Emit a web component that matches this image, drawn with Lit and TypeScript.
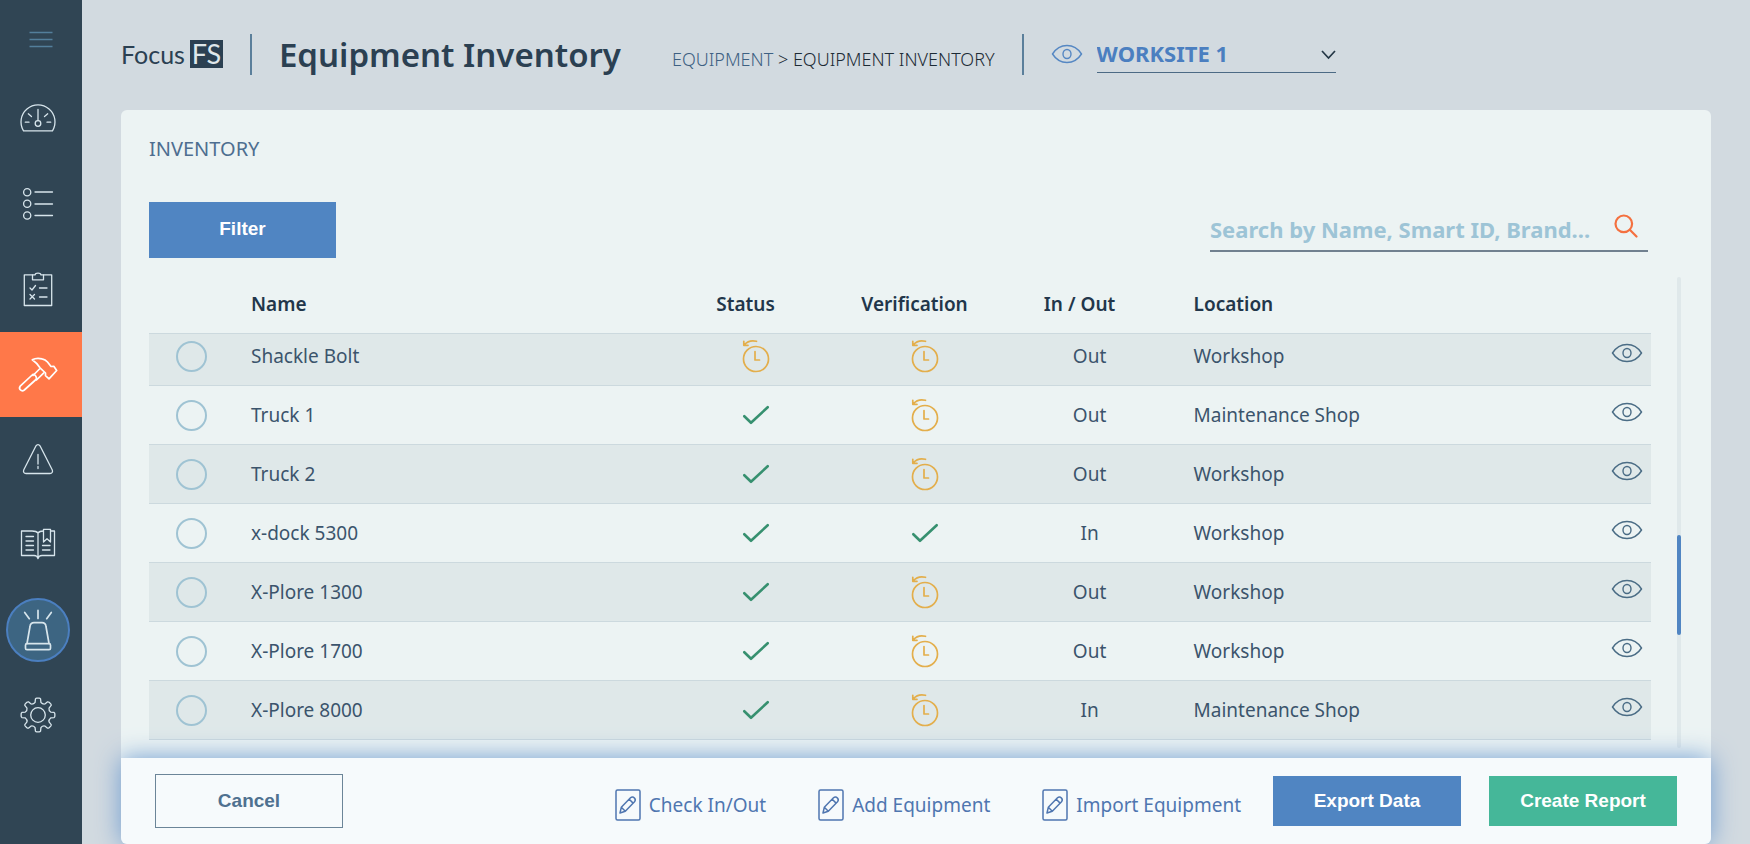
import { LitElement, html, css, svg } from "lit";
import { customElement, property, state } from "lit/decorators.js";

const eye = html`<svg width="32" height="20" viewBox="0 0 32 20" fill="none" stroke="currentColor" stroke-width="1.4" aria-hidden="true">
  <path d="M1.5 10C5 4.500 10 1.500 16 1.500S27 4.500 30.500 10C27 15.500 22 18.500 16 18.500S5 15.500 1.500 10Z" />
  <ellipse cx="16" cy="10" rx="4" ry="4.500" />
</svg>`;

const clock = html`<svg width="28" height="36" viewBox="0 0 28 36" fill="none" stroke="#e3ae4b" stroke-width="1.7" stroke-linecap="round" stroke-linejoin="round" role="img" aria-label="Pending">
  <circle cx="14" cy="21" r="12.500" />
  <path d="M13 13.500V22H17.500" />
  <path d="M14.500 3.300C10 2.100 5.500 3.100 2.300 6.800M1.800 3.300V7.300H6" />
</svg>`;

const check = html`<svg width="28" height="20" viewBox="0 0 28 20" fill="none" stroke="#36906f" stroke-width="2.600" stroke-linecap="round" stroke-linejoin="round" role="img" aria-label="OK">
  <path d="M2.300 11.200L9 17.800L25.700 2.200" />
</svg>`;

const pencil = html`<svg width="26" height="32" viewBox="0 0 26 32" fill="none" stroke="currentColor" stroke-width="1.500" stroke-linejoin="round" aria-hidden="true">
  <rect x="1" y="1" width="24" height="30" rx="1.500" />
  <path d="M5 24L6.300 18.300L15.500 8.800C16.800 7.600 18.300 7.800 19.300 8.900C20.500 10.100 20.600 11.500 19.500 12.800L10.300 22.200ZM6.300 18.300L10.300 22.200M14.200 10.200L18.100 14.100" />
</svg>`;

const navIcons: Record<string, unknown> = {
  Dashboard: svg`<path d="M4.500 29.800A17 17 0 1 1 33.500 29.800Z" /><circle cx="19" cy="22.500" r="2.800" /><path d="M19 8.500V19.500M9.300 12.800L12.500 15.500M28.700 12.800L25.500 15.500M6.300 21.200H10M28 21.200H31.700" />`,
  Lists: svg`<circle cx="8.200" cy="6.200" r="3.600" /><circle cx="8.200" cy="17.800" r="3.600" /><circle cx="8.200" cy="29.500" r="3.600" /><path d="M16 6H33.500M16 18H33.500M16 29.500H33.500" />`,
  Inspections: svg`<path d="M13.500 3.800H5.300V34.500H32.700V3.800H24.500" /><path d="M13.500 3.800H16C16.500 1.500 21.500 1.500 22 3.800H24.500V8.800H13.500Z" /><path d="M11 17L13 19L16.500 14.500M20.500 17H28M11 23.500L15.500 28M15.500 23.500L11 28M20.500 26H28" />`,
  Equipment: svg`<path d="M13.300 3.800C16 2.200 20.500 2.200 23 2.800C25.500 3.300 27 4.200 28.500 6L32 10.500L34.800 10.300L37.700 14.500L30 22.800L26.500 19.700V17L21 11.800C19 8.800 16.500 6 13.300 3.800Z" /><path d="M20.500 13L14 19.500M24.800 16.800L17.500 24M13.700 18.500L1.200 30.200C-.8 33 2.500 36.200 5.300 34L17 23.500C18.500 21.800 15.500 17.200 13.700 18.500Z" />`,
  Incidents: svg`<path d="M17 4.800C18 3.200 20 3.200 21 4.800L33.300 29C34 31 33 32.500 31 32.500H7C5 32.500 4 31 4.700 29Z" /><path d="M19 13.500V23M19 25.500V27.500" />`,
  Library: svg`<path d="M19 7C17.500 5 15.500 5 13 5H2.500V29.500H15C17 29.500 18.500 30 19 32.500C19.500 30 21 29.500 23 29.500H35.500V5H31.500M24.500 5C22 5 20.500 5 19 7V32" /><path d="M24.500 3.300H31.500V16L28 12.800L24.500 16Z" /><path d="M7 10.500H14.500M7 15H14.500M7 19.500H14.500M7 24H14.500M23.500 19.500H31M23.500 24H31" />`,
  Alarm: svg`<path d="M8 32.500L11 15.500C11.300 13 12.800 11.700 15 11.700H23C25.200 11.700 26.700 13 27 15.500L30 32.500" /><rect x="6.500" y="32.700" width="25" height="6" rx="1.500" /><path d="M19 -.6V7.400M5.700 1.400L10.300 7.700M32.300 1.400L27.700 7.700" />`,
  Settings: svg`<circle cx="19" cy="19" r="7.300" />`,
};

const gearPath = (() => {
  const points: string[] = [];
  const teeth = 8;
  const polar = (r: number, deg: number) => {
    const a = (deg * Math.PI) / 180;
    return `${(19 + r * Math.sin(a)).toFixed(2)} ${(19 - r * Math.cos(a)).toFixed(2)}`;
  };
  for (let i = 0; i < teeth; i++) {
    const c = (i * 360) / teeth;
    points.push(`${i ? "L" : "M"}${polar(13, c - 13)}L${polar(16.3, c - 9)}Q${polar(16.9, c - 7)} ${polar(16.900, c - 4)}L${polar(16.900, c + 4)}Q${polar(16.900, c + 7)} ${polar(16.300, c + 9)}L${polar(13, c + 13)}Q${polar(11.500, c + 22.500)} ${polar(13, c + 32)}`);
  }
  return points.join("") + "Z";
})();

interface Item {
  name: string;
  status: boolean;
  verified: boolean;
  direction: "In" | "Out";
  location: string;
}

const items: Item[] = [
  { name: "Shackle Bolt", status: false, verified: false, direction: "Out", location: "Workshop" },
  { name: "Truck 1", status: true, verified: false, direction: "Out", location: "Maintenance Shop" },
  { name: "Truck 2", status: true, verified: false, direction: "Out", location: "Workshop" },
  { name: "x-dock 5300", status: true, verified: true, direction: "In", location: "Workshop" },
  { name: "X-Plore 1300", status: true, verified: false, direction: "Out", location: "Workshop" },
  { name: "X-Plore 1700", status: true, verified: false, direction: "Out", location: "Workshop" },
  { name: "X-Plore 8000", status: true, verified: false, direction: "In", location: "Maintenance Shop" },
];

@customElement("side-nav")
class SideNav extends LitElement {
  @property() active = "Equipment";

  static styles = css`
    :host { display: block; background: #304554; color: #d7e5ec; }
    .menu, .item { display: flex; align-items: center; justify-content: center; border: 0; padding: 0; background: none; color: inherit; }
    .menu { width: 100%; height: 77px; color: #537f9b; cursor: pointer; }
    .item { height: 85px; padding-right: 6px; }
    .item svg { overflow: visible; }
    .active { background: #ff7849; color: #fff; }
    .ring { display: flex; align-items: center; justify-content: center; box-sizing: border-box; width: 64px; height: 64px; border: 2px solid #4b7fc0; border-radius: 50%; background: #3d6582; }
  `;

  render() {
    return html`<nav aria-label="Main">
      <button class="menu" type="button" aria-label="Menu">
        <svg width="24" height="18" viewBox="0 0 24 18" stroke="currentColor" stroke-width="1.300"><path d="M.5 2.500H23.500M.5 9.500H23.500M.5 16.500H23.500" /></svg>
      </button>
      ${Object.entries(navIcons).map(([label, shape]) => {
        const icon = html`<svg width="38" height="38" viewBox="0 0 38 38" fill="none" stroke="currentColor" stroke-width=${label === "Alarm" || label === "Equipment" ? 1.7 : 1.3} stroke-linecap="round" stroke-linejoin="round" aria-hidden="true">${shape}${label === "Settings" ? svg`<path d=${gearPath} />` : ""}</svg>`;
        return html`<a class="item ${label === this.active ? "active" : ""}" href="#" aria-label=${label}>${label === "Alarm" ? html`<span class="ring">${icon}</span>` : icon}</a>`;
      })}
    </nav>`;
  }
}

@customElement("page-header")
class PageHeader extends LitElement {
  static styles = css`
    :host { display: flex; align-items: center; box-sizing: border-box; height: 110px; padding-bottom: 2px; color: #2b4052; font-family: "Noto Sans", sans-serif; white-space: nowrap; }
    .logo { display: flex; align-items: center; gap: 5px; font: 400 25px/28px Lato, sans-serif; color: #2b4052; text-decoration: none; }
    .mark { width: 33px; background: #2b4052; color: #dfe7ea; text-align: center; font-size: 27px; }
    .rule { width: 2px; height: 41px; margin: 0 27px; background: #5b7f9b; }
    h1 { margin: 0; font-size: 33px; line-height: 45px; font-weight: 600; }
    .crumbs { margin: 10px 0 0 51px; font-size: 18px; line-height: 24px; font-weight: 300; color: #1c2a35; }
    .crumbs a { color: #3d6082; text-decoration: none; }
    .site { display: flex; align-items: center; gap: 14px; color: #5587c3; }
    .pick { position: relative; width: 239px; border-bottom: 1px solid #4c6a85; }
    select { appearance: none; width: 100%; height: 36px; padding: 0 24px 2px 0; border: 0; background: none; color: #4b7fc0; font: 700 22px/30px "Noto Sans", sans-serif; }
    .chevron { position: absolute; right: 0; top: 14px; color: #243746; pointer-events: none; }
  `;

  render() {
    return html`
      <a class="logo" href="#"><span>Focus</span><span class="mark">FS</span></a>
      <span class="rule"></span>
      <h1>Equipment Inventory</h1>
      <nav class="crumbs" aria-label="Breadcrumb"><a href="#">EQUIPMENT</a> &gt; <span>EQUIPMENT INVENTORY</span></nav>
      <span class="rule"></span>
      <div class="site">
        ${eye}
        <div class="pick">
          <select aria-label="Worksite"><option>WORKSITE 1</option></select>
          <svg class="chevron" width="15" height="10" viewBox="0 0 15 10" fill="none" stroke="currentColor" stroke-width="1.700"><path d="M1 1L7.500 8L14 1" /></svg>
        </div>
      </div>`;
  }
}

@customElement("inventory-table")
class InventoryTable extends LitElement {
  @property({ attribute: false }) rows: Item[] = [];

  static styles = css`
    :host { display: block; color: #3b546c; font: 400 19px/24px "Noto Sans", sans-serif; }
    table { width: 100%; border-collapse: collapse; table-layout: fixed; }
    th, td { padding: 0; text-align: left; font-weight: 400; }
    thead th { height: 54px; padding-bottom: 2px; color: #22364a; font-weight: 600; }
    tbody tr { height: 59px; border-top: 1px solid #ccd9de; }
    tbody tr:nth-child(odd) { background: #dfe8e9; }
    tbody tr:last-child { border-bottom: 1px solid #ccd9de; }
    tbody tr:first-child { height: 52px; }
    tbody tr:first-child > * { padding-bottom: 7px; }
    .pick { width: 102px; }
    .name { width: 28%; }
    .status { width: 168px; text-align: center; }
    .verification { width: 170px; text-align: center; }
    .direction { width: 160px; text-align: center; }
    thead .status, thead .verification, thead .direction { padding-right: 20px; box-sizing: border-box; }
    .location { padding-left: 24px; }
    .view { width: 48px; text-align: center; }
    input { display: block; appearance: none; box-sizing: border-box; width: 31px; height: 31px; margin: 0 0 0 27px; border: 2px solid #9fc3d3; border-radius: 50%; }
    input:checked { background: #9fc3d3; }
    svg { display: block; margin: 0 auto; }
    button { display: block; margin: 0 auto; padding: 0 0 6px; border: 0; background: none; color: #4a6c85; cursor: pointer; }
  `;

  render() {
    return html`<table>
      <thead>
        <tr>
          <td class="pick"></td>
          <th class="name" scope="col">Name</th>
          <th class="status" scope="col">Status</th>
          <th class="verification" scope="col">Verification</th>
          <th class="direction" scope="col">In / Out</th>
          <th class="location" scope="col">Location</th>
          <td class="view"></td>
        </tr>
      </thead>
      <tbody>
        ${this.rows.map((row) => html`<tr>
          <td><input type="checkbox" aria-label=${`Select ${row.name}`} /></td>
          <th scope="row">${row.name}</th>
          <td class="status">${row.status ? check : clock}</td>
          <td class="verification">${row.verified ? check : clock}</td>
          <td class="direction">${row.direction}</td>
          <td class="location">${row.location}</td>
          <td class="view"><button type="button" aria-label=${`View ${row.name}`}>${eye}</button></td>
        </tr>`)}
      </tbody>
    </table>`;
  }
}

@customElement("action-bar")
class ActionBar extends LitElement {
  static styles = css`
    :host { display: flex; align-items: center; box-sizing: border-box; height: 86px; padding: 0 34px; border-radius: 0 0 6px 6px; background: #f6fafc; box-shadow: 0 0 26px #6f9cd0; }
    button { box-sizing: border-box; width: 188px; height: 50px; padding: 0; border: 0; color: #fff; font: 700 19px/24px "Liberation Sans", sans-serif; cursor: pointer; }
    .cancel { height: 54px; border: 1px solid #6b8598; background: none; color: #4f7190; }
    .links { display: flex; gap: 52px; margin: 8px 32px 0 auto; }
    .links a { display: flex; align-items: center; gap: 8px; color: #4f76b0; font: 400 19px/32px "Noto Sans", sans-serif; text-decoration: none; white-space: nowrap; }
    .main { display: flex; gap: 28px; }
    .export { background: #5085c2; }
    .create { background: #45b799; }
  `;

  render() {
    return html`
      <button class="cancel" type="button">Cancel</button>
      <div class="links">
        ${["Check In/Out", "Add Equipment", "Import Equipment"].map((label) => html`<a href="#">${pencil}${label}</a>`)}
      </div>
      <div class="main">
        <button class="export" type="button">Export Data</button>
        <button class="create" type="button">Create Report</button>
      </div>`;
  }
}

@customElement("app-root")
class AppRoot extends LitElement {
  @state() private query = "";

  static styles = css`
    :host { display: grid; grid-template-columns: 82px minmax(0, 1fr); min-height: 100vh; background: #d2dae0; font-family: "Noto Sans", sans-serif; }
    .page { display: flex; flex-direction: column; padding: 0 39px; }
    .card { display: flex; flex-direction: column; flex: 1; border-radius: 6px; background: #ecf3f3; }
    .content { flex: 1; padding: 25px 30px 0 28px; }
    h2 { margin: 0; color: #4e6e90; font-size: 20px; line-height: 28px; font-weight: 400; }
    .tools { display: flex; justify-content: space-between; align-items: flex-start; margin-top: 39px; padding-right: 33px; }
    .filter { width: 187px; height: 56px; padding: 0 0 2px; border: 0; background: #5085c2; color: #fff; font: 700 19px/24px "Liberation Sans", sans-serif; cursor: pointer; }
    .search { display: flex; align-items: center; width: 438px; height: 48px; border-bottom: 2px solid #71808f; }
    .search input { flex: 1; min-width: 0; height: 36px; margin-top: 6px; padding: 0; border: 0; outline: 0; background: none; color: #4e6e90; font: 700 22px/30px "Noto Sans", sans-serif; }
    .search input::placeholder { color: #9dc4d6; opacity: 1; }
    .search button { padding: 0 10px 0 8px; border: 0; background: none; color: #f4703f; cursor: pointer; }
    .search svg { display: block; }
    .list { display: flex; margin-top: 19px; }
    inventory-table { flex: 1; min-width: 0; padding-bottom: 8px; }
    .track { display: flex; flex-direction: column; width: 4px; margin-left: 26px; background: #dfe8ea; border-radius: 2px; }
    .thumb { height: 100px; margin-top: 258px; border-radius: 2px; background: #5085c2; }
  `;

  render() {
    return html`
      <side-nav active="Equipment"></side-nav>
      <div class="page">
        <page-header></page-header>
        <main class="card">
          <section class="content">
            <h2>INVENTORY</h2>
            <div class="tools">
              <button class="filter" type="button">Filter</button>
              <div class="search">
                <input type="text" aria-label="Search" placeholder="Search by Name, Smart ID, Brand..." .value=${this.query} @input=${(e: Event) => (this.query = (e.target as HTMLInputElement).value)} />
                <button type="button" aria-label="Search"><svg width="24" height="24" viewBox="0 0 24 24" fill="none" stroke="currentColor" stroke-width="2.200" stroke-linecap="round"><circle cx="9.800" cy="9.800" r="8.300" /><path d="M15.800 15.800L22.500 22.500" /></svg></button>
              </div>
            </div>
            <div class="list">
              <inventory-table .rows=${items}></inventory-table>
              <div class="track"><div class="thumb"></div></div>
            </div>
          </section>
          <action-bar></action-bar>
        </main>
      </div>`;
  }
}
